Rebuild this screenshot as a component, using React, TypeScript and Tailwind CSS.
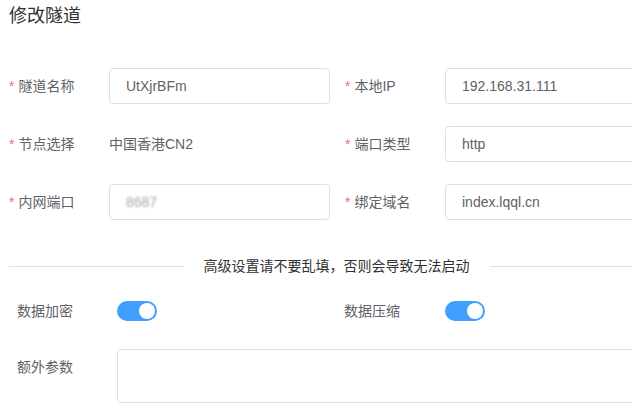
import React from "react";

const font = { fontFamily: '"Liberation Sans", "Noto Sans CJK SC", sans-serif' };

interface FieldProps {
    label: string;
    required?: boolean;
    children: React.ReactNode;
}

const Field: React.FC<FieldProps> = ({ label, required, children }) => (
    <div className="flex items-center h-9">
        <div className="w-[100px] shrink-0 text-[14px] text-[#606266] whitespace-nowrap">
            {required && <span className="text-[#f56c6c] mr-1">*</span>}
            {label}
        </div>
        {children}
    </div>
);

const TextInput: React.FC<{ value: string; blurred?: boolean }> = ({ value, blurred }) => (
    <div className="w-[221px] h-9 shrink-0 border border-[#dcdfe6] rounded-[4px] flex items-center pl-4 text-[14px] text-[#606266]">
        <span className={blurred ? "blur-[1px] text-[#a8a8a8]" : ""}>{value}</span>
    </div>
);

const Toggle: React.FC = () => (
    <div className="w-10 h-5 rounded-full bg-[#409eff] relative shrink-0">
        <span className="absolute right-[2px] top-[2px] w-4 h-4 rounded-full bg-white" />
    </div>
);

export default function App() {
    return (
        <div className="w-[632px] h-[408px] overflow-hidden bg-white" style={font}>
            <div className="pl-[9px] pt-[4px] text-[18px] leading-[24px] text-[#303133]">修改隧道</div>

            <div className="mt-[40px] pl-[9px] grid grid-cols-[321px_321px] gap-x-[15px] gap-y-[22px]">
                <Field label="隧道名称" required>
                    <TextInput value="UtXjrBFm" />
                </Field>
                <Field label="本地IP" required>
                    <TextInput value="192.168.31.111" />
                </Field>
                <Field label="节点选择" required>
                    <span className="text-[14px] text-[#606266]">中国香港CN2</span>
                </Field>
                <Field label="端口类型" required>
                    <TextInput value="http" />
                </Field>
                <Field label="内网端口" required>
                    <TextInput value="8687" blurred />
                </Field>
                <Field label="绑定域名" required>
                    <TextInput value="index.lqql.cn" />
                </Field>
            </div>

            <div className="mt-[36px] ml-[9px] w-[655px] h-5 flex items-center">
                <div className="flex-1 h-px bg-[#dcdfe6]" />
                <span className="px-5 text-[14px] text-[#303133] whitespace-nowrap">高级设置请不要乱填，否则会导致无法启动</span>
                <div className="flex-1 h-px bg-[#dcdfe6]" />
            </div>

            <div className="mt-[15px] pl-[17px] h-10 grid grid-cols-[327px_auto] items-center">
                <div className="flex items-center">
                    <span className="w-[100px] text-[14px] text-[#606266]">数据加密</span>
                    <Toggle />
                </div>
                <div className="flex items-center">
                    <span className="w-[101px] text-[14px] text-[#606266]">数据压缩</span>
                    <Toggle />
                </div>
            </div>

            <div className="mt-[18px] pl-[17px] flex items-start">
                <span className="w-[100px] shrink-0 leading-9 text-[14px] text-[#606266]">额外参数</span>
                <textarea
                    className="w-[547px] h-[54px] shrink-0 border border-[#dcdfe6] rounded-[4px] resize-none outline-none px-4 py-[5px] text-[14px] text-[#606266]"
                    defaultValue=""
                />
            </div>
        </div>
    );
}
